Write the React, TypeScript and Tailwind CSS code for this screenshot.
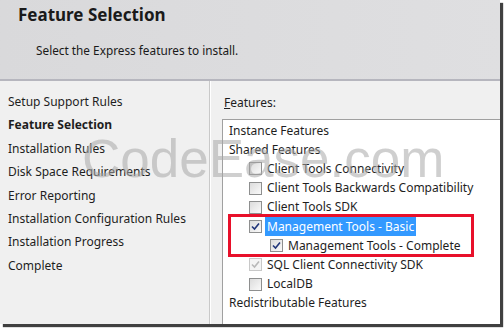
import React from 'react';

const steps = [
  { label: 'Setup Support Rules' },
  { label: 'Feature Selection', active: true },
  { label: 'Installation Rules' },
  { label: 'Disk Space Requirements' },
  { label: 'Error Reporting' },
  { label: 'Installation Configuration Rules' },
  { label: 'Installation Progress' },
  { label: 'Complete' },
];

type Check = 'off' | 'on' | 'disabled';

function Checkbox({ state }: { state: Check }) {
  return (
    <span
      className={`w-[13px] h-[13px] shrink-0 border flex items-center justify-center ${
        state === 'disabled'
          ? 'border-[#c8c8c8] bg-[#f4f4f4]'
          : 'border-[#8e8f8f] bg-gradient-to-br from-[#dcdcdc] to-[#fafafa]'
      }`}
    >
      {state !== 'off' && (
        <svg width="9" height="9" viewBox="0 0 9 9">
          <path
            d="M1 4.5 L3.5 7 L8 1.5"
            fill="none"
            stroke={state === 'on' ? '#21367a' : '#b8b8b8'}
            strokeWidth="1.6"
          />
        </svg>
      )}
    </span>
  );
}

function Row({ children, indent = 0 }: { children: React.ReactNode; indent?: number }) {
  return (
    <div className="h-[19.2px] flex items-center" style={{ paddingLeft: indent }}>
      {children}
    </div>
  );
}

export default function App() {
  return (
    <div className="w-[504px] h-[329px] bg-white relative overflow-hidden font-['Segoe_UI','Noto_Sans',sans-serif] text-[12px] text-[#1e1e1e]">
      <div className="w-[500px] h-[324px] flex flex-col shadow-[3px_3px_1px_rgba(0,0,0,0.75)]">
        {/* header */}
        <div className="h-[81px] shrink-0 bg-gradient-to-r from-[#d9d9db] to-[#dfdfe1] border-b-2 border-[#b6b6be]">
          <div className="pl-[18px] pt-[2px] text-[17px] font-bold text-[#1a1a1a] leading-[26px]">
            Feature Selection
          </div>
          <div className="pl-[36px] pt-[14px] text-[11.8px] text-[#1a1a1a]">
            Select the Express features to install.
          </div>
        </div>

        {/* body */}
        <div className="flex flex-1 min-h-0">
          <div className="w-[210px] shrink-0 bg-[#f0f0f0] border-r border-[#c9c9c9] pl-[8px] pt-[9px] leading-[23.4px]">
            {steps.map((s) => (
              <div key={s.label} className={s.active ? 'font-bold' : ''}>
                {s.label}
              </div>
            ))}
          </div>

          <div className="flex-1 flex flex-col bg-[#f0f0f0] border-l border-white pl-[11px]">
            <div className="h-[38px] pt-[13px] leading-[18px] pl-[2px]">
              <span className="underline">F</span>eatures:
            </div>
            <div className="flex-1 bg-white border border-[#a0a0a0] border-r-0 border-b-0 pl-[6px] pt-[1px] relative">
              <Row>Instance Features</Row>
              <Row>Shared Features</Row>
              <Row indent={20}>
                <Checkbox state="off" />
                <span className="pl-[5px]">Client Tools Connectivity</span>
              </Row>
              <Row indent={20}>
                <Checkbox state="off" />
                <span className="pl-[5px]">Client Tools Backwards Compatibility</span>
              </Row>
              <Row indent={20}>
                <Checkbox state="off" />
                <span className="pl-[5px]">Client Tools SDK</span>
              </Row>
              <Row indent={20}>
                <Checkbox state="on" />
                <span className="ml-[3px] px-[2px] bg-[#3399ff] text-white leading-[19px]">Management Tools - Basic</span>
              </Row>
              <Row indent={41}>
                <Checkbox state="on" />
                <span className="pl-[5px]">Management Tools - Complete</span>
              </Row>
              <Row indent={20}>
                <Checkbox state="disabled" />
                <span className="pl-[5px]">SQL Client Connectivity SDK</span>
              </Row>
              <Row indent={20}>
                <Checkbox state="off" />
                <span className="pl-[5px]">LocalDB</span>
              </Row>
              <Row>Redistributable Features</Row>

              {/* red highlight box */}
              <div className="absolute left-[5px] top-[94px] w-[246px] h-[43px] border-[3px] border-[#e8102a]" />
            </div>
          </div>
        </div>
      </div>

      {/* watermark */}
      <div className="absolute left-[82px] top-[129px] font-['Liberation_Sans',Arial,sans-serif] text-[53px] leading-[60px] text-[#a8a8a8]/55 pointer-events-none">
        CodeEase.com
      </div>
    </div>
  );
}
